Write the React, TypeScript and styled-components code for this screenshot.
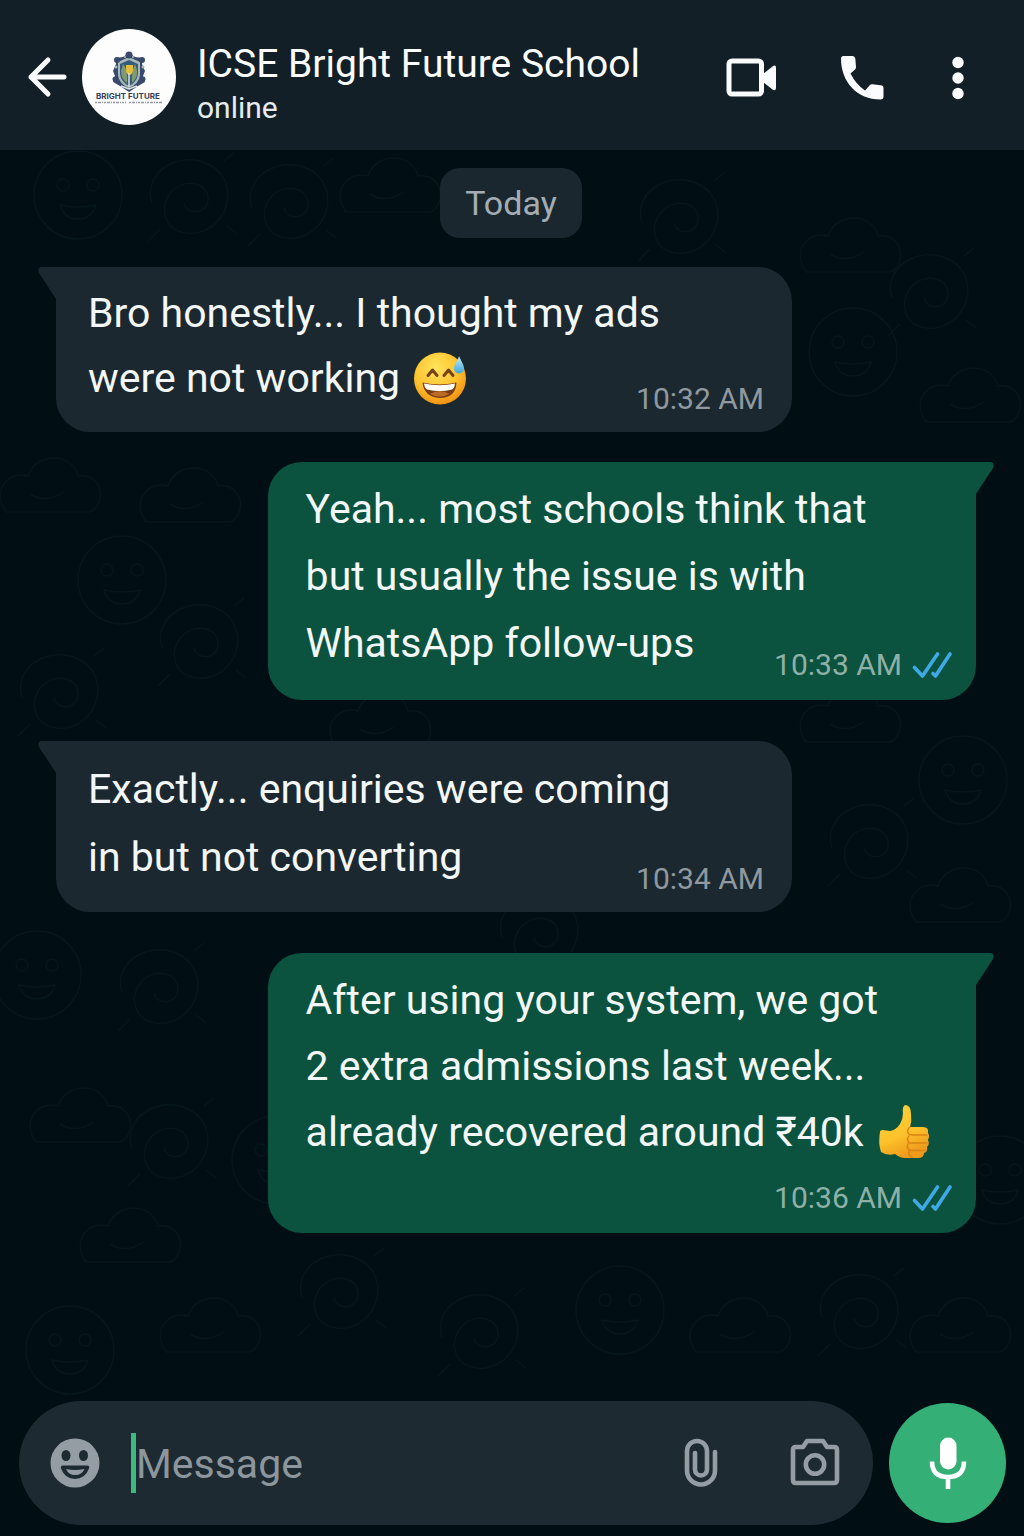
import React from "react";
import styled, { createGlobalStyle } from "styled-components";

const GlobalStyle = createGlobalStyle`
  *, *::before, *::after { box-sizing: border-box; }
  body {
    margin: 0;
    background: #010f15;
    font-family: Roboto, Inter, "Liberation Sans", sans-serif;
  }
  button { font: inherit; }
`;

const Page = styled.div`
  position: relative;
  isolation: isolate;
  display: flex;
  flex-direction: column;
  min-height: 100vh;
  overflow: hidden;
  background: #010f15;
`;

const Wallpaper = styled.svg`
  position: absolute;
  inset: 0;
  z-index: -1;
  width: 100%;
  height: 100%;
`;

const Header = styled.header`
  display: flex;
  align-items: center;
  height: 150px;
  padding: 4px 52px 0 26px;
  background: #121f26;
  color: #fafcfd;
`;

const IconButton = styled.button<{ $width: number }>`
  display: grid;
  place-items: center;
  flex: none;
  width: ${(p) => p.$width}px;
  height: 60px;
  padding: 0;
  border: 0;
  background: none;
  color: inherit;
  cursor: pointer;
`;

const Avatar = styled.div`
  flex: none;
  width: 94px;
  height: 96px;
  margin-left: 12px;
  border-radius: 50%;
  overflow: hidden;
  background: #fdfdfe;
`;

const Contact = styled.div`
  flex: 1;
  min-width: 0;
  margin-left: 21px;
  padding-top: 16px;
`;

const Name = styled.h1`
  margin: 0;
  font-size: 39px;
  line-height: 46px;
  font-weight: 400;
  white-space: nowrap;
`;

const Status = styled.p`
  margin: 0;
  font-size: 30px;
  line-height: 42px;
  color: #e6ebee;
`;

const Actions = styled.nav`
  display: flex;
  align-items: center;
  gap: 52px;
`;

const Chat = styled.main`
  flex: 1;
  display: flex;
  flex-direction: column;
  padding: 18px 48px 40px 56px;
`;

const DayChip = styled.div`
  align-self: center;
  margin: 0 0 29px -10px;
  padding: 0 25px;
  border-radius: 20px;
  background: #1b272e;
  color: #a3adb3;
  font-size: 34px;
  line-height: 70px;
`;

const Bubble = styled.article<{ $own?: boolean; $before: number }>`
  position: relative;
  display: grid;
  align-self: ${(p) => (p.$own ? "flex-end" : "flex-start")};
  width: ${(p) => (p.$own ? "77%" : "80%")};
  margin-top: ${(p) => p.$before}px;
  padding: ${(p) => (p.$own ? "14px 24px 17px 38px" : "14px 28px 15px 32px")};
  border-radius: ${(p) => (p.$own ? "34px 0 34px 34px" : "0 34px 34px 34px")};
  background: ${(p) => (p.$own ? "#0b523f" : "#1c282f")};
`;

const TailShape = styled.svg<{ $own?: boolean }>`
  position: absolute;
  top: 0;
  ${(p) => (p.$own ? "left: 100%;" : "right: 100%; transform: scaleX(-1);")}
  width: 18px;
  height: 32px;
  fill: ${(p) => (p.$own ? "#0b523f" : "#1c282f")};
`;

const Body = styled.p<{ $leading: number }>`
  grid-area: 1 / 1;
  margin: 0;
  padding-bottom: 6px;
  color: #f3f7f8;
  font-size: 41px;
  line-height: ${(p) => p.$leading}px;
  white-space: nowrap;
`;

const Emoji = styled.svg`
  width: 54px;
  height: 56px;
  margin: -12px 0 -12px 3px;
  vertical-align: -2px;
`;

const Meta = styled.footer<{ $own?: boolean; $stacked?: boolean }>`
  grid-area: ${(p) => (p.$stacked ? "2 / 1" : "1 / 1")};
  place-self: end;
  display: flex;
  align-items: center;
  gap: 10px;
  margin-top: ${(p) => (p.$stacked ? "9px" : "0")};
  color: ${(p) => (p.$own ? "#8fb0a7" : "#8f999f")};
  font-size: 30px;
  line-height: 36px;
  white-space: nowrap;
`;

const Composer = styled.form`
  display: flex;
  align-items: center;
  gap: 16px;
  padding: 0 18px 11px 19px;
`;

const Field = styled.div`
  flex: 1;
  display: flex;
  align-items: center;
  min-width: 0;
  height: 124px;
  padding: 0 29px 0 26px;
  border-radius: 62px;
  background: #1e2a31;
  color: #949da3;
`;

const Caret = styled.span`
  flex: none;
  width: 5px;
  height: 60px;
  margin-left: 26px;
  background: #3dbb7c;
`;

const MessageInput = styled.input`
  flex: 1;
  min-width: 0;
  height: 60px;
  padding: 2px 0 0;
  border: 0;
  outline: 0;
  background: none;
  color: #f3f7f8;
  caret-color: #3dbb7c;
  font-family: inherit;
  font-size: 41px;
  &::placeholder { color: #8c969c; opacity: 1; }
`;

const Tools = styled.div`
  display: flex;
  gap: 56px;
`;

const MicButton = styled.button`
  display: grid;
  place-items: center;
  flex: none;
  width: 117px;
  height: 120px;
  padding: 0;
  border: 0;
  border-radius: 50%;
  background: #34b077;
  color: #fff;
  cursor: pointer;
`;

const Tail = ({ own }: { own?: boolean }) => (
  <TailShape $own={own} viewBox="0 0 18 32" aria-hidden="true">
    <path d="M0 0H15Q19 1 17 6L0 32Z" />
  </TailShape>
);

const Ticks = () => (
  <svg width="40" height="28" viewBox="0 0 40 28" fill="none" stroke="#3fa9e6" strokeWidth="3.6" strokeLinecap="round" strokeLinejoin="round" aria-label="Read">
    <path d="M2.500 16.500L10.500 25L25.500 3" />
    <path d="M21 22.500L23.500 25L38 3" />
  </svg>
);

const SweatSmile = () => (
  <Emoji viewBox="0 0 54 56" role="img" aria-label="Grinning face with sweat">
    <defs>
      <radialGradient id="skin" cx=".42" cy=".3" r=".72">
        <stop offset="0" stopColor="#ffe55c" />
        <stop offset=".6" stopColor="#fdc22f" />
        <stop offset="1" stopColor="#f08f12" />
      </radialGradient>
      <linearGradient id="drop" x2="0" y2="1">
        <stop offset="0" stopColor="#c4eefb" />
        <stop offset="1" stopColor="#3ba5dc" />
      </linearGradient>
    </defs>
    <circle cx="27" cy="28.500" r="26" fill="url(#skin)" />
    <path d="M15 25.500L19.500 20L24 25.500M31 25.500L35.500 20L40 25.500" fill="none" stroke="#764416" strokeWidth="3" strokeLinecap="round" strokeLinejoin="round" />
    <path d="M9.500 32.500Q27 36.500 43.500 32.500Q43 48 26.500 48Q11 47 9.500 32.500Z" fill="#7b3e14" />
    <path d="M11 33.500Q27 37 42 33.500Q41.500 38.500 39 39.500Q27 42.500 14 39.500Q11.500 38 11 33.500Z" fill="#fffdf6" />
    <path d="M17 44Q27 38 36 44Q27 49.500 17 44Z" fill="#bd6a26" />
    <path d="M46 6C48 11 51 14.500 51 18.500A5 5 0 0 1 41 18.500C41 14.500 45 11 46 6Z" fill="url(#drop)" />
  </Emoji>
);

const ThumbsUp = () => (
  <Emoji viewBox="0 0 54 56" role="img" aria-label="Thumbs up">
    <defs>
      <linearGradient id="thumb" x2=".4" y2="1">
        <stop offset="0" stopColor="#ffd43b" />
        <stop offset=".65" stopColor="#fdc12b" />
        <stop offset="1" stopColor="#ef9b1b" />
      </linearGradient>
    </defs>
    <path d="M3 28Q3 26 6 26L13 27Q19 26 23 20Q26 15 26 9Q25 1 29 1Q34 2 34 10Q35 17 33 23H46Q52 23 51 29Q53 32 51 36Q53 40 50 43Q51 48 47 49Q47 54 41 54H28Q23 54 18 50Q10 52 4 48Q1 39 3 28Z" fill="url(#thumb)" />
    <g fill="none" stroke="#d98416" strokeWidth="1.500" strokeLinecap="round">
      <path d="M33 23Q30 25 31 29Q32 31 35 31H50M32 32Q29 35 32 39H50M31 40Q29 44 33 46.500H48M32 47Q31 52 35 53" />
    </g>
  </Emoji>
);

const SchoolLogo = () => (
  <svg width="94" height="96" viewBox="0 0 94 96" role="img" aria-label="Bright Future crest">
    <path d="M47 24L53 28L61 29L60 35L63 42L61 47L63 53L56 57L47 63L38 57L31 53L33 47L31 42L34 35L33 29L41 28Z" fill="#38496b" />
    <path d="M47 28L58 33V46Q57 55 47 59Q37 55 36 46V33Z" fill="#a9b9b8" />
    <path d="M47 31L56 35V45Q55 53 47 57Q39 53 38 45V35Z" fill="#355b7c" />
    <path d="M41 35Q46 40 45 54Q39 50 39 42ZM53 35Q49 43 50 54Q56 49 55 41Z" fill="#7e9a72" />
    <path d="M44 36H51V42Q50 46 47.500 46Q44 45 44 42Z" fill="#e4bd3f" />
    <path d="M47 44V58M39 57L47 60L55 57" stroke="#dfe5e4" strokeWidth="1.500" fill="none" />
    <g fill="#38496b"><circle cx="35" cy="31" r="3" /><circle cx="60" cy="31" r="3" /><circle cx="47" cy="26" r="3.500" /><circle cx="33" cy="50" r="2.500" /><circle cx="61" cy="50" r="2.500" /></g>
    <g fill="#a9b9b8"><circle cx="34" cy="38" r="1.500" /><circle cx="61" cy="38" r="1.500" /><circle cx="43" cy="28" r="1" /><circle cx="51" cy="28" r="1" /></g>
    <text x="46" y="70" textAnchor="middle" fontFamily="Inter, sans-serif" fontSize="8" fontWeight="700" fill="#383e56">BRIGHT FUTURE</text>
    <path d="M13 73.500H44M47 73.500H80" stroke="#9598a3" strokeWidth="1.500" strokeDasharray="2 1 3 1 1 1" />
  </svg>
);

const Doodles = () => (
  <Wallpaper viewBox="0 0 1024 1536" preserveAspectRatio="xMidYMid slice" aria-hidden="true">
    <defs>
      <g id="face">
        <circle r="44" />
        <circle cx="-15" cy="-10" r="6" /><circle cx="15" cy="-10" r="6" />
        <path d="M-18 10Q0 14 18 10Q14 24 0 24Q-14 24 -18 10Z" />
      </g>
      <g id="swirl">
        <path d="M-38 8C-48-24-8-46 20-30C50-14 40 32 6 38C-24 42-34 14-18-4C-4-18 20-12 18 6C16 20-4 20-6 8" />
        <path d="M-30 34L-42 46M34-34L44-42M36 30L46 38" />
      </g>
      <g id="cloud">
        <path d="M-44 22C-60 0-40-20-22-14C-14-38 22-38 28-14C52-18 58 14 40 22ZM-20 4Q-4 14 14 2" />
      </g>
    </defs>
    <g fill="none" stroke="#06161b" strokeWidth="1.500">
      {[[78, 195], [122, 580], [37, 975], [853, 352], [963, 780], [276, 1160], [70, 1350], [620, 1310], [1000, 1180]].map(([x, y]) => (
        <use key={`f${x}`} href="#face" x={x} y={y} />
      ))}
      {[[190, 195], [290, 200], [680, 215], [160, 985], [170, 1140], [340, 1290], [860, 1310], [60, 690], [200, 640], [930, 290], [870, 840], [480, 1330], [540, 930]].map(([x, y]) => (
        <use key={`s${x}`} href="#swirl" x={x} y={y} />
      ))}
      {[[390, 190], [80, 1120], [130, 1240], [210, 1330], [740, 1330], [50, 490], [190, 500], [970, 400], [850, 250], [850, 720], [960, 900], [380, 725], [960, 1330]].map(([x, y]) => (
        <use key={`c${x}-${y}`} href="#cloud" x={x} y={y} />
      ))}
    </g>
  </Wallpaper>
);

interface Message {
  lines: string[];
  time: string;
  own?: boolean;
  emoji?: React.ReactNode;
  stacked?: boolean;
  leading: number;
  before: number;
}

const messages: Message[] = [
  { lines: ["Bro honestly... I thought my ads", "were not working"], time: "10:32 AM", emoji: <SweatSmile />, leading: 65, before: 0 },
  { lines: ["Yeah... most schools think that", "but usually the issue is with", "WhatsApp follow-ups"], time: "10:33 AM", own: true, leading: 67, before: 30 },
  { lines: ["Exactly... enquiries were coming", "in but not converting"], time: "10:34 AM", leading: 68, before: 41 },
  { lines: ["After using your system, we got", "2 extra admissions last week...", "already recovered around ₹40k"], time: "10:36 AM", own: true, emoji: <ThumbsUp />, stacked: true, leading: 66, before: 41 },
];

export default function App() {
  return (
    <Page>
      <GlobalStyle />
      <Doodles />
      <Header>
        <IconButton $width={44} type="button" aria-label="Back">
          <svg width="44" height="44" viewBox="0 0 44 44" fill="none" stroke="currentColor" strokeWidth="5" strokeLinecap="round" strokeLinejoin="round">
            <path d="M38 22H5M22 5L5 22L22 39" />
          </svg>
        </IconButton>
        <Avatar><SchoolLogo /></Avatar>
        <Contact>
          <Name>ICSE Bright Future School</Name>
          <Status>online</Status>
        </Contact>
        <Actions aria-label="Chat actions">
          <IconButton $width={60} type="button" aria-label="Video call">
            <svg width="60" height="60" viewBox="0 0 60 60">
              <rect x="9" y="14" width="32.500" height="33" rx="3" fill="none" stroke="currentColor" strokeWidth="5" />
              <path d="M43 27L52.500 19.500Q56 17 56 21V40Q56 45 52.500 42.500L43 35Z" fill="currentColor" />
            </svg>
          </IconButton>
          <IconButton $width={60} type="button" aria-label="Voice call">
            <svg width="60" height="60" viewBox="0 0 60 60" fill="currentColor">
              <path d="M11.500 9H20.500Q23 9 23.300 11.500L24 20Q24 21.500 23 22.500L18.500 26.500Q24 37.500 33 43.500L37.500 38.500Q38.800 37 40.500 37.200L48.500 38.200Q51.500 38.500 51.500 41V49.500Q51.500 52.500 48.500 52.500C25 52.500 9 35 9 11.500Q9 9 11.500 9Z" />
            </svg>
          </IconButton>
          <IconButton $width={28} type="button" aria-label="More options">
            <svg width="28" height="60" viewBox="0 0 28 60" fill="currentColor">
              <circle cx="14" cy="15.500" r="5.700" /><circle cx="14" cy="31" r="5.700" /><circle cx="14" cy="46.500" r="5.700" />
            </svg>
          </IconButton>
        </Actions>
      </Header>
      <Chat>
        <DayChip>Today</DayChip>
        {messages.map((m) => (
          <Bubble key={m.time} $own={m.own} $before={m.before}>
            <Tail own={m.own} />
            <Body $leading={m.leading}>
              {m.lines.map((line, i) => (
                <React.Fragment key={line}>
                  {i > 0 && <br />}
                  {line}
                </React.Fragment>
              ))}
              {m.emoji && <> {m.emoji}</>}
            </Body>
            <Meta $own={m.own} $stacked={m.stacked}>
              <time>{m.time}</time>
              {m.own && <Ticks />}
            </Meta>
          </Bubble>
        ))}
      </Chat>
      <Composer onSubmit={(e) => e.preventDefault()}>
        <Field>
          <IconButton $width={60} type="button" aria-label="Emoji">
            <svg width="60" height="60" viewBox="0 0 60 60">
              <circle cx="30" cy="30" r="24.500" fill="currentColor" />
              <g fill="#1e2a31">
                <ellipse cx="21" cy="22.500" rx="4.500" ry="5.500" /><ellipse cx="38.500" cy="22.500" rx="4.500" ry="5.500" />
                <path d="M18 32.500H42Q45 32.500 44 35.500Q40 46 30 46Q20 46 16 35.500Q15 32.500 18 32.500Z" />
              </g>
              <path d="M21 36Q30 38 39.500 36Q37 42 30 42Q23.500 42 21 36Z" fill="currentColor" />
            </svg>
          </IconButton>
          <Caret aria-hidden="true" />
          <MessageInput type="text" placeholder="Message" aria-label="Message" />
          <Tools>
            <IconButton $width={58} type="button" aria-label="Attach">
              <svg width="58" height="58" viewBox="0 0 58 58" fill="none" stroke="currentColor" strokeWidth="4.600" strokeLinecap="round">
                <path d="M43 18V36.500A14 14 0 0 1 15 36.500V17A10 10 0 0 1 35 17V35.500A6 6 0 0 1 23 35.500V19" />
              </svg>
            </IconButton>
            <IconButton $width={58} type="button" aria-label="Camera">
              <svg width="58" height="58" viewBox="0 0 58 58" fill="none" stroke="currentColor" strokeWidth="4.600" strokeLinejoin="round">
                <path d="M10 13H17L21 7H37L41 13H48Q51 13 51 16V46Q51 49 48 49H10Q7 49 7 46V16Q7 13 10 13Z" />
                <circle cx="29" cy="30.500" r="9.200" />
              </svg>
            </IconButton>
          </Tools>
        </Field>
        <MicButton type="button" aria-label="Record voice message">
          <svg width="60" height="60" viewBox="0 0 60 60">
            <rect x="22" y="4.500" width="16.500" height="32" rx="8.250" fill="currentColor" />
            <path d="M14 28.500Q14 44 30 44Q46 44 46 28.500M30 44V56" fill="none" stroke="currentColor" strokeWidth="4.600" />
          </svg>
        </MicButton>
      </Composer>
    </Page>
  );
}
